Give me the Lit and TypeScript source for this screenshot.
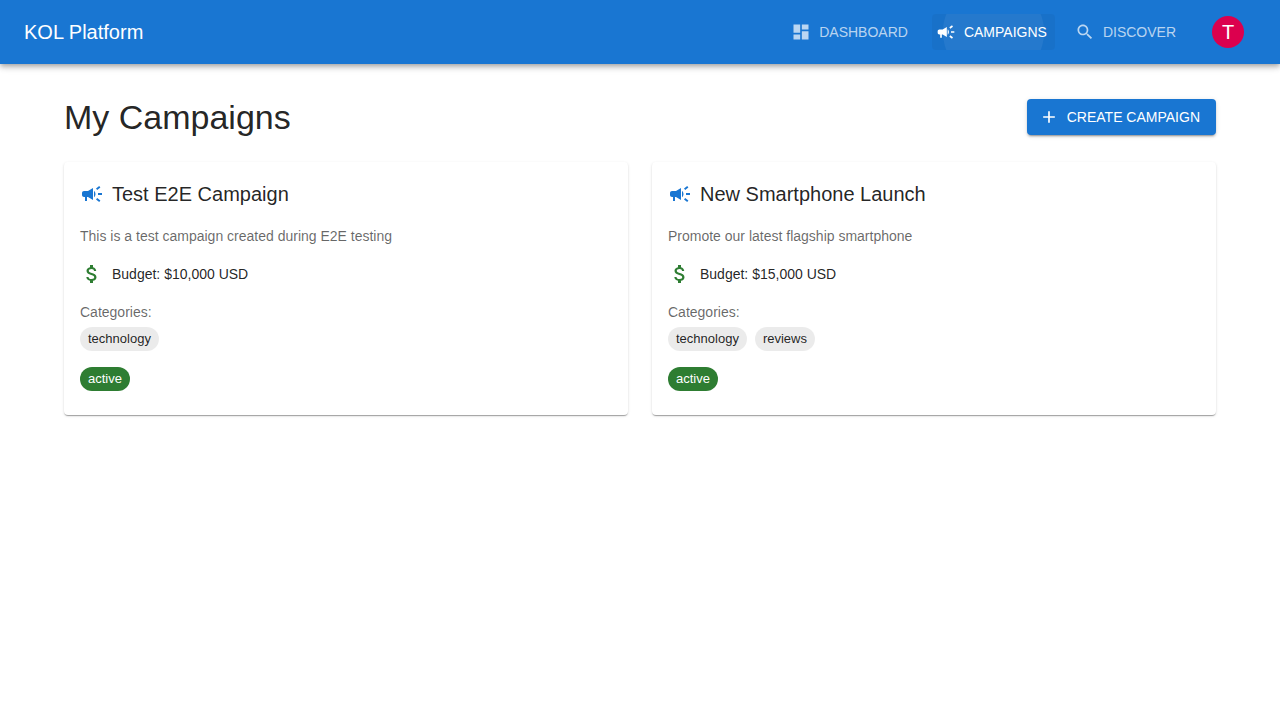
import { LitElement, css, html } from "lit";
import { customElement, property, state } from "lit/decorators.js";
import { classMap } from "lit/directives/class-map.js";

const ICONS = {
  dashboard: "M3 13h8V3H3v10zm0 8h8v-6H3v6zm10 0h8V11h-8v10zm0-18v6h8V3h-8z",
  campaign:
    "M18 11v2h4v-2h-4zm-2 6.61c.96.71 2.21 1.65 3.2 2.39.4-.53.8-1.07 1.2-1.6-.99-.74-2.24-1.68-3.2-2.4-.4.54-.8 1.08-1.2 1.61zM20.4 5.6c-.4-.53-.8-1.07-1.2-1.6-.99.74-2.24 1.68-3.2 2.4.4.53.8 1.07 1.2 1.6.96-.72 2.21-1.65 3.2-2.4zM4 9c-1.1 0-2 .9-2 2v2c0 1.1.9 2 2 2h1v4h2v-4h1l5 3V6L8 9H4zm11.5 3c0-1.33-.58-2.53-1.5-3.35v6.69c.92-.81 1.5-2.01 1.5-3.34z",
  search:
    "M15.5 14h-.79l-.28-.27C15.41 12.59 16 11.11 16 9.5 16 5.91 13.09 3 9.5 3S3 5.91 3 9.5 5.91 16 9.5 16c1.61 0 3.09-.59 4.23-1.57l.27.28v.79l5 4.99L20.49 19l-4.99-5zm-6 0C7.01 14 5 11.99 5 9.5S7.01 5 9.5 5 14 7.01 14 9.5 11.99 14 9.5 14z",
  add: "M19 13h-6v6h-2v-6H5v-2h6V5h2v6h6v2z",
  money:
    "M11.8 10.9c-2.27-.59-3-1.2-3-2.15 0-1.09 1.01-1.85 2.7-1.85 1.78 0 2.44.85 2.5 2.1h2.21c-.07-1.72-1.12-3.3-3.21-3.81V3h-3v2.16c-1.94.42-3.5 1.68-3.5 3.61 0 2.31 1.91 3.46 4.7 4.13 2.5.6 3 1.48 3 2.41 0 .69-.49 1.79-2.7 1.79-2.06 0-2.87-.92-2.98-2.1h-2.2c.12 2.19 1.76 3.42 3.68 3.83V21h3v-2.15c1.95-.37 3.5-1.5 3.5-3.55 0-2.84-2.43-3.81-4.7-4.4z",
};

type IconName = keyof typeof ICONS;

const icon = (name: IconName) => html`
  <svg class="icon" viewBox="0 0 24 24" aria-hidden="true"><path d=${ICONS[name]}></path></svg>
`;

interface Campaign {
  title: string;
  description: string;
  budget: number;
  currency: string;
  categories: string[];
  status: string;
}

const CAMPAIGNS: Campaign[] = [
  {
    title: "Test E2E Campaign",
    description: "This is a test campaign created during E2E testing",
    budget: 10000,
    currency: "USD",
    categories: ["technology"],
    status: "active",
  },
  {
    title: "New Smartphone Launch",
    description: "Promote our latest flagship smartphone",
    budget: 15000,
    currency: "USD",
    categories: ["technology", "reviews"],
    status: "active",
  },
];

const NAV: { label: string; icon: IconName }[] = [
  { label: "Dashboard", icon: "dashboard" },
  { label: "Campaigns", icon: "campaign" },
  { label: "Discover", icon: "search" },
];

const shared = css`
  * {
    box-sizing: border-box;
  }
  h1,
  h2,
  p,
  ul {
    margin: 0;
    padding: 0;
    font-weight: 400;
  }
  button {
    border: 0;
    margin: 0;
    font-family: inherit;
    cursor: pointer;
  }
  .icon {
    display: block;
    flex: none;
    width: 24px;
    height: 24px;
    fill: currentColor;
  }
`;

@customElement("app-header")
class AppHeader extends LitElement {
  @state() private active = "Campaigns";

  static styles = [
    shared,
    css`
      :host {
        display: block;
        position: relative;
      }
      .bar {
        display: flex;
        align-items: center;
        min-height: 64px;
        padding: 0 24px;
        background: #1976d2;
        color: #fff;
        box-shadow:
          0 2px 4px -1px rgba(0, 0, 0, 0.2),
          0 4px 5px 0 rgba(0, 0, 0, 0.14),
          0 1px 10px 0 rgba(0, 0, 0, 0.12);
      }
      .brand {
        flex: 1;
        font-size: 20px;
        line-height: 32px;
      }
      .nav {
        display: flex;
        gap: 16px;
        margin-right: 16px;
      }
      .nav-item {
        display: flex;
        align-items: center;
        gap: 8px;
        padding: 6px 8px 6px 4px;
        border-radius: 4px;
        background: transparent;
        color: rgba(255, 255, 255, 0.7);
        font-size: 14px;
        line-height: 24px;
        text-transform: uppercase;
      }
      .nav-item .icon {
        width: 20px;
        height: 20px;
      }
      .nav-item.active {
        color: #fff;
        background:
          radial-gradient(circle at center, rgba(255, 255, 255, 0.06) 50px, transparent 51px),
          rgba(0, 0, 0, 0.04);
      }
      .account {
        padding: 12px;
        border-radius: 50%;
        background: transparent;
      }
      .avatar {
        display: flex;
        align-items: center;
        justify-content: center;
        width: 32px;
        height: 32px;
        border-radius: 50%;
        background: #dc004e;
        color: #fff;
        font-size: 20px;
        line-height: 20px;
      }
    `,
  ];

  render() {
    return html`
      <header class="bar">
        <div class="brand">KOL Platform</div>
        <nav class="nav">
          ${NAV.map(
            (item) => html`
              <button
                type="button"
                class=${classMap({ "nav-item": true, active: item.label === this.active })}
                @click=${() => (this.active = item.label)}
              >
                ${icon(item.icon)}<span>${item.label}</span>
              </button>
            `,
          )}
        </nav>
        <button type="button" class="account"><span class="avatar">T</span></button>
      </header>
    `;
  }
}

@customElement("campaign-card")
class CampaignCard extends LitElement {
  @property({ attribute: false }) campaign!: Campaign;

  static styles = [
    shared,
    css`
      :host {
        display: block;
      }
      .card {
        height: 100%;
        padding: 16px 16px 24px;
        border-radius: 4px;
        background: #fff;
        font-size: 14px;
        line-height: 20px;
        box-shadow:
          0 2px 1px -1px rgba(0, 0, 0, 0.2),
          0 1px 1px 0 rgba(0, 0, 0, 0.14),
          0 1px 3px 0 rgba(0, 0, 0, 0.12);
      }
      .row {
        display: flex;
        align-items: center;
        gap: 8px;
        margin-bottom: 16px;
      }
      .title {
        font-size: 20px;
        line-height: 32px;
      }
      .primary {
        display: flex;
        color: #1976d2;
      }
      .money {
        display: flex;
        color: #2e7d32;
      }
      .muted {
        color: rgba(0, 0, 0, 0.6);
      }
      .description {
        margin-bottom: 16px;
      }
      .chips {
        display: flex;
        flex-wrap: wrap;
        gap: 8px;
        margin: 5px 0 16px;
        list-style: none;
      }
      .chip {
        padding: 0 8px;
        border-radius: 12px;
        background: rgba(0, 0, 0, 0.08);
        font-size: 13px;
        line-height: 24px;
      }
      .status {
        display: inline-block;
        vertical-align: top;
        background: #2e7d32;
        color: #fff;
      }
    `,
  ];

  render() {
    const c = this.campaign;
    return html`
      <article class="card">
        <div class="row">
          <span class="primary">${icon("campaign")}</span>
          <h2 class="title">${c.title}</h2>
        </div>
        <p class="muted description">${c.description}</p>
        <div class="row">
          <span class="money">${icon("money")}</span>
          <p>Budget: $${c.budget.toLocaleString("en-US")} ${c.currency}</p>
        </div>
        <p class="muted">Categories:</p>
        <ul class="chips">
          ${c.categories.map((name) => html`<li class="chip">${name}</li>`)}
        </ul>
        <span class="chip status">${c.status}</span>
      </article>
    `;
  }
}

@customElement("app-root")
class AppRoot extends LitElement {
  static styles = [
    shared,
    css`
      :host {
        display: block;
        min-height: 100vh;
        background: #fff;
        color: rgba(0, 0, 0, 0.87);
        font-family: "Liberation Sans", Arial, sans-serif;
      }
      .content {
        max-width: 1200px;
        margin: 0 auto;
        padding: 32px 24px;
      }
      .heading {
        display: flex;
        align-items: center;
        justify-content: space-between;
        margin-bottom: 24px;
      }
      .page-title {
        font-size: 34px;
        line-height: 42px;
      }
      .create {
        display: flex;
        align-items: center;
        gap: 8px;
        padding: 6px 16px 6px 12px;
        border-radius: 4px;
        background: #1976d2;
        color: #fff;
        font-size: 14px;
        line-height: 24px;
        text-transform: uppercase;
        box-shadow:
          0 3px 1px -2px rgba(0, 0, 0, 0.2),
          0 2px 2px 0 rgba(0, 0, 0, 0.14),
          0 1px 5px 0 rgba(0, 0, 0, 0.12);
      }
      .create .icon {
        width: 20px;
        height: 20px;
      }
      .grid {
        display: grid;
        grid-template-columns: repeat(2, minmax(0, 1fr));
        gap: 24px;
      }
      @media (max-width: 700px) {
        .grid {
          grid-template-columns: minmax(0, 1fr);
        }
      }
    `,
  ];

  render() {
    return html`
      <app-header></app-header>
      <main class="content">
        <div class="heading">
          <h1 class="page-title">My Campaigns</h1>
          <button type="button" class="create">${icon("add")}<span>Create Campaign</span></button>
        </div>
        <section class="grid">
          ${CAMPAIGNS.map((c) => html`<campaign-card .campaign=${c}></campaign-card>`)}
        </section>
      </main>
    `;
  }
}
